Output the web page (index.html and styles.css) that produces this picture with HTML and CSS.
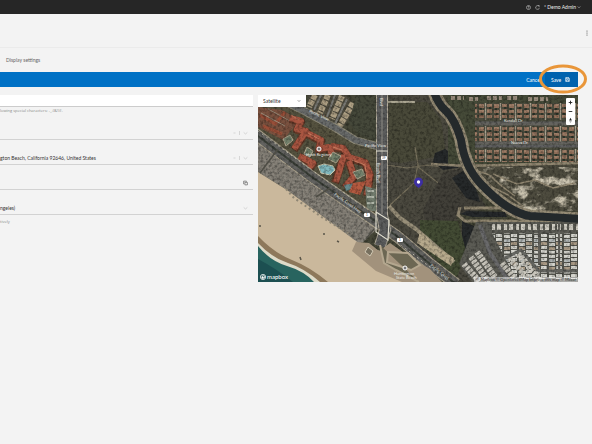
FILE: index.html
```html
<!DOCTYPE html>
<html lang="en">
<head>
  <meta charset="utf-8">
  <meta name="viewport" content="width=device-width, initial-scale=1">
  <title>Display settings</title>
  <link rel="stylesheet" href="styles.css">
</head>
<body>
  <header class="topbar">
    <button class="icon-btn" aria-label="Help">
      <svg class="icon" viewBox="0 0 16 16"><circle cx="8" cy="8" r="6.5"/><path d="M6 6.5a2 2 0 1 1 2.600 2q-.6.200-.6 1M8 11v1.500"/></svg>
    </button>
    <button class="icon-btn" aria-label="Refresh">
      <svg class="icon" viewBox="0 0 16 16"><path d="M12 3.500A6 6 0 1 0 14 9M9 1.500h4.500V6"/></svg>
    </button>
    <button class="user">* Demo Admin
      <svg class="chevron" viewBox="0 0 16 16"><path d="M3 6l5 5 5-5"/></svg>
    </button>
  </header>

  <div class="page-head">
    <button class="icon-btn" aria-label="More">
      <svg class="dots" viewBox="0 0 4 12"><circle cx="2" cy="2" r="1.200"/><circle cx="2" cy="6" r="1.200"/><circle cx="2" cy="10" r="1.200"/></svg>
    </button>
  </div>

  <nav class="tabs"><a href="#display">Display settings</a></nav>

  <main class="content">
    <div class="actions">
      <button class="cancel">Cancel</button>
      <button class="save">Save
        <svg class="icon" viewBox="0 0 16 16"><path d="M2 2h10l2 2v10H2zM5 2v4h6V2M5 14V9h6v5"/></svg>
        <svg class="ring" viewBox="0 0 48 30"><ellipse cx="24" cy="15" rx="22.500" ry="13"/></svg>
      </button>
    </div>

    <div class="columns">
      <form class="settings">
        <input class="name" type="text" aria-label="Name">
        <p class="hint">lowing special characters: -_.(&amp;!)#.</p>
        <div class="field">
          <input type="text" aria-label="Group">
          <button type="button" class="icon-btn" aria-label="Clear group"><svg class="mark" viewBox="0 0 16 16"><path d="M3 3l10 10M13 3L3 13"/></svg></button>
          <span class="split"></span>
          <button type="button" class="icon-btn" aria-label="Open groups"><svg class="mark wide" viewBox="0 0 16 16"><path d="M2 6l6 5 6-5"/></svg></button>
        </div>
        <div class="field">
          <input type="text" aria-label="Address" value="gton Beach, California 92646, United States">
          <button type="button" class="icon-btn" aria-label="Clear address"><svg class="mark" viewBox="0 0 16 16"><path d="M3 3l10 10M13 3L3 13"/></svg></button>
          <span class="split"></span>
          <button type="button" class="icon-btn" aria-label="Open addresses"><svg class="mark wide" viewBox="0 0 16 16"><path d="M2 6l6 5 6-5"/></svg></button>
        </div>
        <div class="field">
          <input type="text" aria-label="Coordinates">
          <button type="button" class="icon-btn" aria-label="Copy"><svg class="icon copy" viewBox="0 0 16 16"><path d="M6 6h8v8H6zM3.500 11H2V2h9v2"/></svg></button>
        </div>
        <div class="field">
          <select aria-label="Time zone"><option>ngeles)</option></select>
          <svg class="mark wide" viewBox="0 0 16 16"><path d="M2 6l6 5 6-5"/></svg>
        </div>
        <p class="hint zone">tively</p>
      </form>

      <section class="map" aria-label="Map">
        <svg class="tiles" viewBox="0 0 320 187" preserveAspectRatio="xMidYMid slice">
          <defs>
            <!-- surface grain -->
            <filter id="grain" x="0" y="0" width="100%" height="100%">
              <feTurbulence type="fractalNoise" baseFrequency="0.35" numOctaves="3" seed="4"/>
              <feColorMatrix values="0 0 0 0 0  0 0 0 0 0  0 0 0 0 0  1.800 0 0 0 -0.750"/>
              <feComposite in2="SourceGraphic" operator="in"/>
            </filter>
            <filter id="scrub" x="0" y="0" width="100%" height="100%">
              <feTurbulence type="fractalNoise" baseFrequency="0.07 0.11" numOctaves="4" seed="9"/>
              <feColorMatrix values="0 0 0 0 .60  0 0 0 0 .55  0 0 0 0 .43  0 5 0 0 -2.500"/>
              <feComposite in2="SourceGraphic" operator="in"/>
            </filter>
            <pattern id="homes" width="15" height="23" patternUnits="userSpaceOnUse" x="220" y="8">
              <rect width="15" height="23" fill="#4a4b3d"/>
              <path d="M1 1h5v4H1zM1 7h5v3H1zM1 12h5v3H1zM9 1h5v3H9zM9 6h5v4H9zM9 12h5v3H9z" fill="#8f6e59"/>
              <path d="M1 2h5M1 8h5M9 2h5M9 8h5M9 13h5" stroke="#ad8d74" stroke-width="1"/>
              <path d="M3 5v2M12 4v2M4 10v2M11 10v2" stroke="#2c3429" stroke-width="2"/>
              <path d="M7.500 0v17" stroke="#aaa18f" stroke-width="1.400"/>
              <path d="M0 20h15" stroke="#606060" stroke-width="3"/>
            </pattern>
            <pattern id="trailers" width="15" height="20" patternUnits="userSpaceOnUse" x="223" y="139">
              <rect width="15" height="20" fill="#55564f"/>
              <path d="M0 0h6v3H0zM0 4h6v3H0zM0 12h6v3H0zM0 16h6v3H0zM8 1h6v3H8zM8 9h6v3H8zM8 17h6v2.500H8z" fill="#d4d4cd"/>
              <path d="M0 8h6v3H0zM8 13h6v3H8z" fill="#a99a85"/>
              <path d="M8 5h6v3H8z" fill="#b2b7b6"/>
            </pattern>
            <pattern id="cars" width="6" height="4" patternUnits="userSpaceOnUse" patternTransform="rotate(38)">
              <rect width="6" height="4" fill="#817c73"/>
              <path d="M0 1h2M3 3h2" stroke="#928d84" stroke-width="1"/><path d="M4 1h1" stroke="#50534f" stroke-width="1"/>
            </pattern>
          </defs>

          <rect width="320" height="187" fill="#454637"/>
          <path d="M129 0H178L196 28 207 66 198 120 222 187H190L129 135z" fill="#4b493f"/>
          <path d="M131 7h38l14 18 5 35-45 8-12-2z" fill="#494939"/>
          <path d="M129 70l20 3 20-3 34 5M157 52l3 18-4 18-24 22M160 72l28 22" fill="none" stroke="#77705c" stroke-width="1.200"/>
          <path d="M186 77l19-4 24 40-30 7-17 30-14-12-3-24z" fill="#413f38"/>
          <path d="M177 58l10-4 12 8 1 11-15 2-10-8zM205 76l11 11 6 20-14-4-14-20zM204 126l12 5 2 22-8 7-6-12z" fill="#26292a"/>
          <path d="M162 125l38 1 8 30-10 29-36-36z" fill="#434b34"/>

          <!-- north housing and scrub -->
          <rect x="190" width="130" height="69" fill="#454a38"/>
          <rect x="217" y="8" width="103" height="59" fill="url(#homes)"/>
          <path d="M193 3h13M211 4h9M229 3h15M249 3h11M270 4h20" stroke="#998c7d" stroke-width="4" stroke-dasharray="4 2"/>
          <path d="M217 29H320M217 48H320" stroke="#65645f" stroke-width="3"/>
          <path d="M207 69H320V116H252L226 94z" fill="#4d4b3e"/>
          <path d="M214 72H320V116H258L226 94z" filter="url(#scrub)"/>
          <path d="M173 69l35 2 112-3" fill="none" stroke="#8f856f" stroke-width="2.500"/>
          <path d="M210 75q20 2 25 8t22 18M235 79l24 10 18-4 18 8 22-5M226 88l24 12 16 12" fill="none" stroke="#918771" stroke-width="1.500"/>

          <!-- flood channels -->
          <path d="M176-4Q179 8 188 16T203 45Q207 72 222 88T250 112 272 121L324 124" fill="none" stroke="#958b75" stroke-width="13"/>
          <path d="M202 112l-2 8 7 6h45l30 3h38M206 113h45" fill="none" stroke="#8f856f" stroke-width="3"/>
          <path d="M209 116l38 1 2 5h-35l-12-3z" fill="#25282a"/>

          <!-- trailer park -->
          <path d="M218 127H320V187H214L201 169z" fill="#5b5b54"/>
          <path d="M234 132H320" stroke="#cdcac0" stroke-width="6" stroke-dasharray="3 2 4 3"/>
          <path d="M234 138H320V184H258z" fill="url(#trailers)"/>
          <path d="M222 130l10 28 18 27" fill="none" stroke="#69696a" stroke-width="4"/>
          <path d="M219 157l18 25M213 162l19 27M206 169l16 18M251 163l18 19M260 159l23 27M244 168l12 15" fill="none" stroke="#c9c6bc" stroke-width="6" stroke-dasharray="3 1"/>
          <path d="M247 163l16-8 18 21h39" fill="none" stroke="#666762" stroke-width="3"/>
          <path d="M301 127v52M281 136v34" stroke="#64635d" stroke-width="2"/>

          <!-- resort district -->
          <path d="M0 10H30L78 36l42 16v83L0 43z" fill="#55523f"/>
          <path d="M0 12l24 3 18 10-17 20-25-13z" fill="#79513f"/>
          <path d="M2 20l15 9 10-12M5 31l19 8" fill="none" stroke="#984e38" stroke-width="3"/>
          <path d="M3 18l24 13M10 14l22 12" stroke="#9e8e7b" stroke-width="1"/>
          <g fill="none" stroke="#623827" stroke-width="8" stroke-linejoin="round">
            <path d="M32 24l11 3-4 8 9 2-12 18M49 39l14 7-2 9 10-2 4 9M41 62l14 7-7 8M73 52l12 2 6 9 16 5 5 12-3 21M86 61l-9 27M91 67l5 15-9 11"/>
          </g>
          <g fill="none" stroke="#a85541" stroke-width="6" stroke-linejoin="round">
            <path d="M32 23l11 3-4 8 9 2-12 18M49 38l14 7-2 9 10-2 4 9M41 61l14 7-7 8M73 51l12 2 6 9 16 5 5 12-3 21M86 60l-8 27M91 66l5 15-9 11"/>
          </g>
          <path d="M33 20l8 5M50 38l11 6M75 52l9 3M94 65l13 5 2 14" fill="none" stroke="#c47b5f" stroke-width="1"/>
          <path d="M25 44l7-4 3 5-7 6zM49 52l6 4-3 6-6-3zM75 57l8 4-5 7-8-4zM95 77l9-3 3 6-8 4z" fill="#72806b" stroke="#b1a68f" stroke-width="1"/>
          <path d="M60 71l6-2 9 2 2 4-5 5-9-2z" fill="#80b8bd" stroke="#c7c5ad" stroke-width="1"/>
          <path d="M86 90l11-2-1 5-8 3z" fill="#65888a"/>
          <path d="M95 88l13-2-6 14-11-3z" fill="#b45a40"/>
          <path d="M107 91l11 3v22h-9z" fill="#727c6e"/>
          <path d="M109 96h7M109 102h7M109 108h7" stroke="#aeb4a7" stroke-width="2"/>
          <path d="M50 0h38l10 12-15 24-30-15z" fill="#504d40"/>
          <path d="M57 0l-6 12M70 0l-8 18M84 1L74 24M95 8L81 32" stroke="#ad9f83" stroke-width="6" stroke-dasharray="5 1"/>
          <path d="M63 0l-7 15M77 0l-8 22M89 4L77 29" stroke="#787873" stroke-width="2"/>
          <path d="M98 0h20v46l-18-7-9-11z" fill="#45483a"/>
          <path d="M24 5l24 12 28 15 21 13 25 7" fill="none" stroke="#8d8977" stroke-width="8"/>
          <path d="M24 5l24 12 28 15 21 13 25 7" fill="none" stroke="#686a69" stroke-width="6"/>

          <!-- main roads -->
          <path d="M0 47l58 43 62 43-18 17L29 95 0 77z" fill="url(#cars)"/>
          <path d="M-4 38L54 82 103 116 140 142 172 169 198 189" fill="none" stroke="#aaa18c" stroke-width="12"/>
          <path d="M-4 38L54 82 103 116 140 142 172 169 198 189" fill="none" stroke="#62625f" stroke-width="10"/>
          <path d="M-4 38L54 82 103 116 140 142 172 169 198 189" fill="none" stroke="#3c4139" stroke-width="2"/>
          <path d="M0 36L55 76 110 115M139 147l50 38" fill="none" stroke="#bbb8a8" stroke-width="1" stroke-dasharray="2 3"/>
          <path d="M124-4V120L127 135 122 151" fill="none" stroke="#b4ad9d" stroke-width="12"/>
          <path d="M124-4V120L127 135 122 151" fill="none" stroke="#5c5d5d" stroke-width="10"/>
          <path d="M131 111l11 12 16 11 38 33" fill="none" stroke="#988f79" stroke-width="4"/>
          <path d="M162 136l8 7 6 7 20 13-3 8-34-23z" fill="#b6a98c"/>
          <path d="M129 7h28" stroke="#aba692" stroke-width="2"/>

          <path d="M0 0H320V187H190L100 150 0 78z" filter="url(#grain)" opacity=".45"/>

          <!-- water and beach stay smooth -->
          <path d="M176-4Q179 8 188 16T203 45Q207 72 222 88T250 112 272 121L324 124" fill="none" stroke="#24292b" stroke-width="8"/>
          <path d="M0 77L29 95l73 54 23 8 30 30H0z" fill="#cab89c"/>
          <path d="M28 94l8 9 29 20 28 17" fill="none" stroke="#8e8674" stroke-width="2" stroke-dasharray="2 3"/>
          <path d="M98 147l13 1 10 8 11-8 20 14 20 12 12 13h-40l-26-11-24-20z" fill="#a2927c"/>
          <path d="M122 150l4 18 12 7 23 12M130 157l20 1 12 12-9 5-24-8z" fill="#6c6753" stroke="#b4a78f" stroke-width="2"/>
          <path d="M110 152l5 4-3 5-5-4z" fill="#77705f" stroke="#d0c7b2" stroke-width="1"/>
          <path d="M0 141Q16 158 34 165T70 187H0z" fill="#8d785b"/>
          <path d="M0 148Q14 163 30 168T62 187H0z" fill="#dedbc9"/>
          <path d="M0 151Q12 166 29 171T56 187H0z" fill="#28645f"/>
          <path d="M0 164q19 10 35 23H0z" fill="#1c4f51"/>
          <path d="M42 162l1 3M79 146l2 1M2 130v2M65 139h2" stroke="#5a5549" stroke-width="1.500"/>
          <path d="M2 78l18-24M58 102l14-9M108 144l8-10" stroke="#4e4d45" stroke-width="1.500"/>
          <path d="M124 0V119" stroke="#8b8982" stroke-width="1"/>
          <path d="M118 56h12M118 117l13 8-1 20-12-8z" fill="none" stroke="#e0ddcf" stroke-width="1.200"/>

          <g class="places">
            <text transform="translate(119 68) rotate(90)">Beach Blvd</text>
            <text transform="translate(122 3) rotate(90)">Blvd</text>
            <text transform="translate(51 17) rotate(25)">Pacific View</text>
            <text x="107" y="52">Pacific View</text>
            <text x="246" y="27">Kendall Dr</text>
            <text x="253" y="49">Nueva Dr</text>
            <text x="48" y="61">Hyatt Regency</text>
            <text x="136" y="180">Huntington</text>
            <text x="138" y="184">State Beach</text>
            <text transform="translate(76 100) rotate(35)">Pacific Coast Hwy</text>
            <text transform="translate(172 171) rotate(37)">Pacific Coast</text>
          </g>
          <g class="shields">
            <rect x="106" y="118" width="6" height="4" rx="1"/><text x="108" y="121">1</text>
            <rect x="139" y="143" width="6" height="4" rx="1"/><text x="141" y="146">1</text>
            <rect x="123" y="61" width="6" height="4" rx="1"/><text x="124" y="64">39</text>
          </g>
          <circle cx="61" cy="54" r="2" fill="#777" stroke="#fff" stroke-width="1"/>
          <circle cx="147" cy="173" r="2" fill="#777" stroke="#fff" stroke-width="1"/>
          <path d="M156 87a4.500 4.500 0 1 1 9 0q0 3-4.500 6-4.500-3-4.500-6z" fill="#3d2fa3"/>
          <circle cx="160.500" cy="87" r="1.700" fill="#fff"/>
        </svg>

        <div class="layer">
          <select aria-label="Map style"><option>Satellite</option></select>
          <svg class="chevron" viewBox="0 0 16 16"><path d="M3 5l5 5 5-5"/></svg>
        </div>
        <div class="zoom">
          <button aria-label="Zoom in"><svg viewBox="0 0 10 10"><path d="M5 3v4M3 5h4"/></svg></button>
          <button aria-label="Zoom out"><svg viewBox="0 0 10 10"><path d="M3 5h4"/></svg></button>
          <button aria-label="Reset north"><svg viewBox="0 0 10 10"><path class="needle" d="M5 2l1.500 3h-3z"/><path class="tail" d="M3.500 5.500h3L5 8z"/></svg></button>
        </div>
        <a class="brand" href="#mapbox">
          <svg viewBox="0 0 16 16"><circle cx="8" cy="8" r="7" fill="none" stroke="#fff" stroke-width="2"/><path d="M4 12q-1-5 2-7.500t6 1-1 6T4 12z" fill="#fff"/><path d="M9 4l1 2 2 1-2 1-1 2-1-2-2-1 2-1z" fill="#315f5b"/></svg>
          mapbox
        </a>
        <div class="credits">
          <a href="#mapbox">© Mapbox</a> <a href="#osm">© OpenStreetMap</a> <a href="#improve">Improve this map</a> <a href="#maxar">© Maxar</a>
        </div>
      </section>
    </div>
  </main>
</body>
</html>
```

FILE: styles.css
```css
* {
  box-sizing: border-box;
}
body {
  margin: 0;
  min-height: 100vh;
  background: #f3f3f3;
  color: #333;
  font: 5px/8px Lato, "Open Sans", sans-serif;
  overflow-x: hidden;
}
button, input, select {
  margin: 0;
  padding: 0;
  border: 0;
  background: none;
  color: inherit;
  font: inherit;
  appearance: none;
}
a {
  color: inherit;
  text-decoration: none;
}
svg {
  display: block;
}
.icon, .chevron, .mark {
  width: 5px;
  height: 5px;
  fill: none;
  stroke: currentColor;
  stroke-width: 2;
}
.topbar {
  display: flex;
  align-items: center;
  justify-content: flex-end;
  gap: 4px;
  height: 14px;
  padding-right: 11px;
  background: #262626;
  color: #eee;
}
.topbar .icon {
  stroke-width: 1.5;
}
.user {
  display: flex;
  align-items: center;
  gap: 1px;
}
.user .chevron {
  width: 4px;
  height: 4px;
}
.page-head {
  display: flex;
  align-items: center;
  justify-content: flex-end;
  height: 34px;
  padding: 4px 3px 0;
  border-bottom: 1px solid #ebebeb;
}
.dots {
  width: 4px;
  height: 6px;
  fill: #555;
}
.tabs {
  height: 24px;
  padding: 8px 6px;
  color: #666;
}
.content {
  padding-right: 14px;
}
.actions {
  display: flex;
  justify-content: flex-end;
  height: 15px;
  background: #0071c5;
  color: #fff;
}
.cancel {
  padding: 0 4px;
}
.save {
  position: relative;
  display: flex;
  align-items: center;
  justify-content: space-between;
  width: 33px;
  padding: 0 8px 0 6px;
  background: #0062ae;
}
.ring {
  position: absolute;
  top: -8px;
  left: -6px;
  z-index: 1;
  width: 48px;
  height: 30px;
  fill: none;
  stroke: #e99639;
  stroke-width: 3;
}
.columns {
  display: grid;
  grid-template-columns: 253fr 320fr;
  align-items: start;
  gap: 5px;
  padding-top: 8px;
}
.settings {
  min-width: 0;
}
.name {
  display: block;
  width: 100%;
  height: 12px;
  background: #fff;
  border-bottom: 1px solid #ccc;
}
.hint {
  margin: 0;
  color: #888;
  font-family: "Open Sans", sans-serif;
  font-size: 4px;
}
.zone {
  padding-top: 3px;
}
.field {
  display: flex;
  align-items: flex-end;
  gap: 3px;
  height: 25px;
  padding: 0 5px 2px 0;
  border-bottom: 1px solid #d2d2d2;
}
.field input, .field select {
  flex: 1;
  min-width: 0;
  height: 8px;
}
.field .mark {
  width: 3px;
  height: 8px;
  color: #c4c4c4;
}
.field .wide {
  width: 5px;
}
.split {
  width: 1px;
  height: 4px;
  margin: 2px 0;
  background: #d6d6d6;
}
.field .copy {
  height: 8px;
  color: #555;
}
.map {
  position: relative;
  min-width: 0;
  aspect-ratio: 320 / 187;
  overflow: hidden;
}
.tiles {
  width: 100%;
  height: 100%;
}
.places {
  fill: #e9e9e4;
  font-size: 4px;
}
.shields rect {
  fill: #fff;
}
.shields text {
  fill: #333;
  font-size: 3px;
}
.layer {
  position: absolute;
  top: 0;
  left: 0;
  display: flex;
  align-items: center;
  width: 48px;
  height: 12px;
  padding: 0 5px;
  background: #fff;
}
.layer select {
  flex: 1;
  min-width: 0;
}
.layer .chevron {
  width: 4px;
  height: 4px;
}
.zoom {
  position: absolute;
  top: 3px;
  right: 3px;
  width: 9px;
  border-radius: 1px;
  background: #fff;
}
.zoom button {
  display: block;
  width: 9px;
  height: 9px;
}
.zoom svg {
  width: 9px;
  height: 9px;
  stroke: #222;
  stroke-width: 1;
}
.zoom .needle {
  fill: #222;
  stroke: none;
}
.zoom .tail {
  fill: #bbb;
  stroke: none;
}
.brand {
  position: absolute;
  left: 2px;
  bottom: 1px;
  display: flex;
  align-items: center;
  gap: 1px;
  color: #fff;
  font: 500 6px/8px Lato, sans-serif;
}
.brand svg {
  width: 6px;
  height: 6px;
}
.credits {
  position: absolute;
  right: 0;
  bottom: 0;
  padding: 0 2px;
  background: rgba(255, 255, 255, 0.5);
  color: #333;
  font-size: 4px;
  line-height: 5px;
}
```
